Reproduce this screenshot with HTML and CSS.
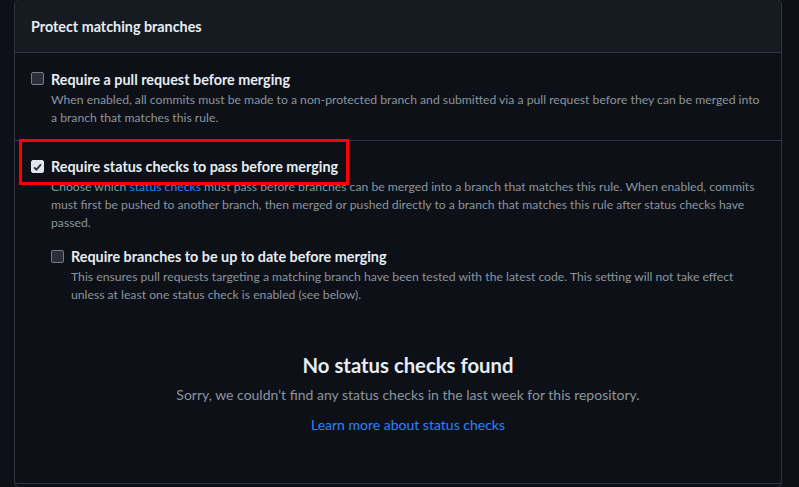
FILE: index.html
```html
<!DOCTYPE html>
<html lang="en">
<head>
<meta charset="utf-8">
<title>Protect matching branches</title>
<link rel="stylesheet" href="styles.css">
</head>
<body>
<div class="box">
  <div class="box-header">Protect matching branches</div>

  <div class="row row-first">
    <div class="check-item">
      <span class="cb"></span>
      <div class="check-body">
        <div class="check-title">Require a pull request before merging</div>
        <p class="check-desc">When enabled, all commits must be made to a non-protected branch and submitted via a pull request before they can be merged into a branch that matches this rule.</p>
      </div>
    </div>
  </div>

  <div class="row row-second">
    <div class="highlight"></div>
    <div class="check-item">
      <span class="cb cb-checked"><svg viewBox="0 0 12 12" width="12" height="12"><path d="M2.3 6.4 L4.8 8.9 L9.8 3.2" fill="none" stroke="#2b2f36" stroke-width="2"/></svg></span>
      <div class="check-body">
        <div class="check-title">Require status checks to pass before merging</div>
        <p class="check-desc">Choose which <a class="link" href="#">status checks</a> must pass before branches can be merged into a branch that matches this rule. When enabled, commits must first be pushed to another branch, then merged or pushed directly to a branch that matches this rule after status checks have passed.</p>

        <div class="check-item sub">
          <span class="cb"></span>
          <div class="check-body">
            <div class="check-title">Require branches to be up to date before merging</div>
            <p class="check-desc">This ensures pull requests targeting a matching branch have been tested with the latest code. This setting will not take effect unless at least one status check is enabled (see below).</p>
          </div>
        </div>

        <div class="blank">
          <h3 class="blank-title">No status checks found</h3>
          <p class="blank-text">Sorry, we couldn’t find any status checks in the last week for this repository.</p>
          <a class="link blank-link" href="#">Learn more about status checks</a>
        </div>
      </div>
    </div>
  </div>
  <div class="row row-next"></div>
</div>
</body>
</html>
```
FILE: styles.css
```css
* { box-sizing: border-box; }
html, body { margin: 0; padding: 0; overflow: hidden; }
body {
  background: #0d1117;
  color: #e6edf3;
  font-family: Lato, "Noto Sans", sans-serif;
  font-size: 14px;
  height: 487px;
}
.box {
  margin: -1px 0 0 14px;
  width: 768px;
  border: 1px solid #30363d;
  border-radius: 6px;
  background: #0d1117;
}
.box-header {
  height: 53px;
  padding: 0 16px;
  display: flex;
  align-items: center;
  background: #161b22;
  border-bottom: 1px solid #30363d;
  border-radius: 6px 6px 0 0;
  font-weight: 700;
  font-size: 14.35px;
}
.row {
  position: relative;
  padding: 17px 16px 0;
  border-bottom: 1px solid #30363d;
}
.row-first { height: 88px; }
.row-second { height: 343px; padding-top: 16px; }
.row-next { border-bottom: 0; height: 3px; padding: 0; }
.check-item {
  display: flex;
  gap: 7px;
}
.check-body { flex: 1; min-width: 0; }
.cb {
  flex: none;
  width: 13px;
  height: 13px;
  margin-top: 2px;
  border: 1px solid #767b83;
  border-radius: 2px;
  background: #2b2f36;
  display: flex;
  align-items: center;
  justify-content: center;
}
.cb-checked {
  margin-top: 3px;
  background: #dfe6ee;
  border-color: #dfe6ee;
}
.cb-checked svg { display: block; }
.check-title {
  font-weight: 700;
  font-size: 14.35px;
  line-height: 20px;
}
.check-desc {
  margin: 1px 0 0;
  font-size: 12.2px;
  line-height: 18px;
  color: #8b949e;
}
.link { color: #2f81f7; text-decoration: none; }
.sub { margin-top: 15px; }
.sub .cb { margin-top: 3px; }
.blank {
  margin: 46px 0 0;
  text-align: center;
}
.blank-title {
  margin: 0;
  font-size: 20.3px;
  font-weight: 700;
  line-height: 30px;
}
.blank-text {
  margin: 4px 0 0;
  font-size: 14px;
  line-height: 21px;
  color: #8b949e;
}
.blank-link {
  display: inline-block;
  margin-top: 9px;
  font-size: 14px;
  line-height: 21px;
}
.highlight {
  position: absolute;
  left: 4px;
  top: -2px;
  width: 330px;
  height: 46px;
  border: 3px solid #ff0000;
  pointer-events: none;
}
```
